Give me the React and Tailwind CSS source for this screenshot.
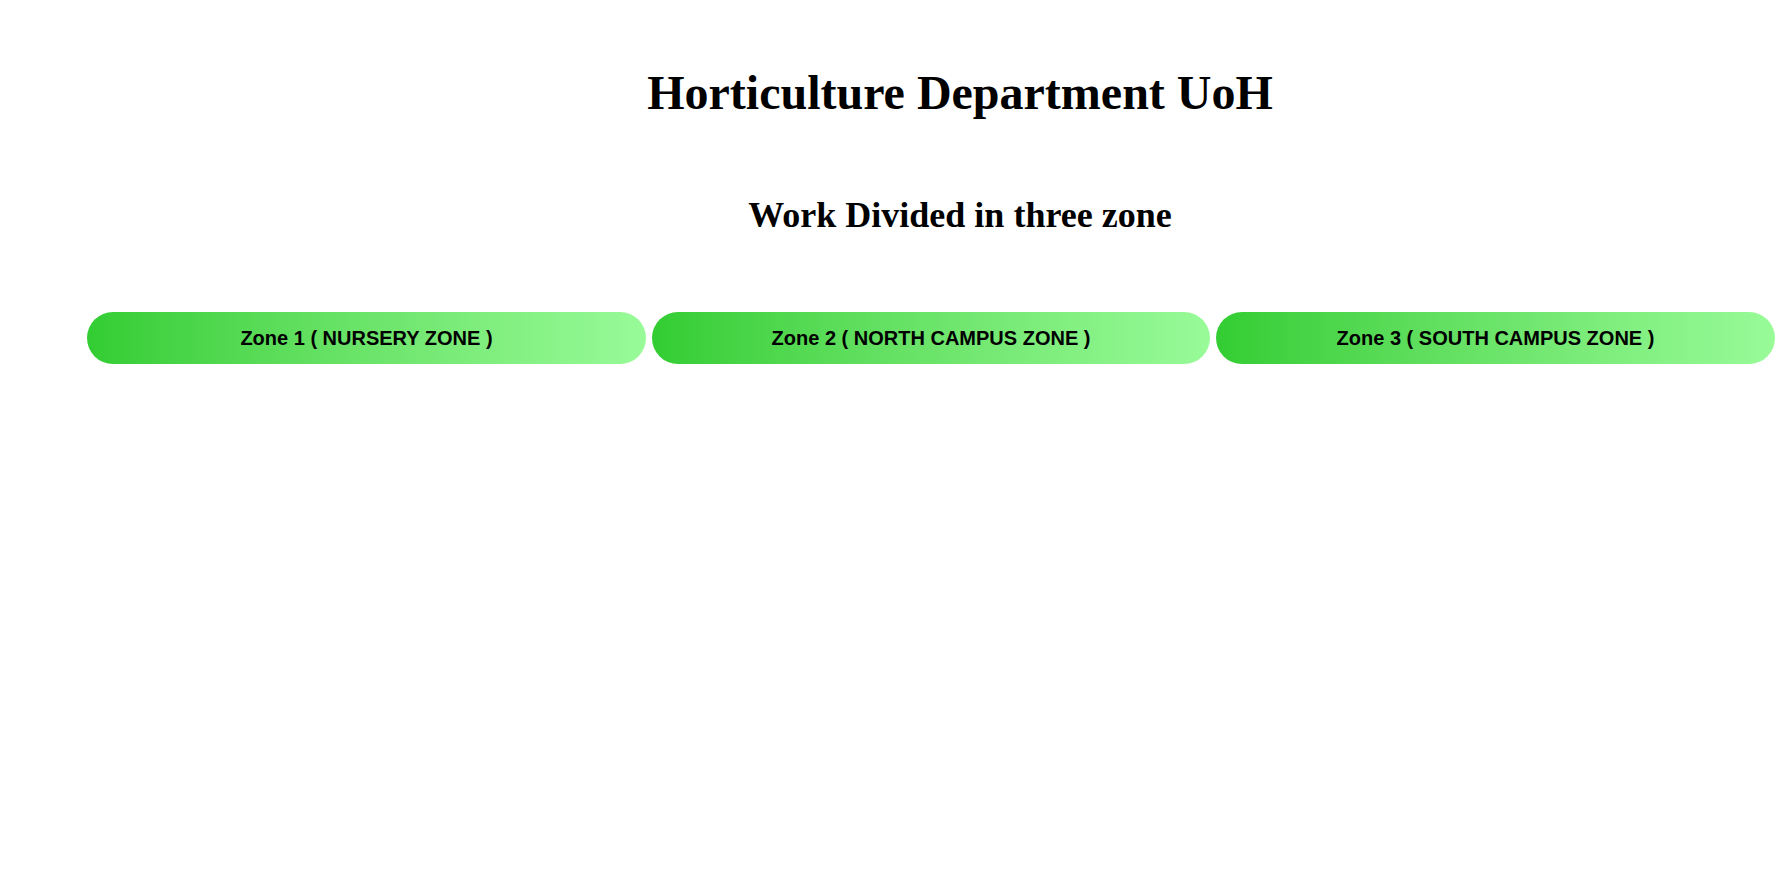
const zones = [
  { label: 'Zone 1 ( NURSERY ZONE )', width: 'w-[559px]' },
  { label: 'Zone 2 ( NORTH CAMPUS ZONE )', width: 'w-[558px]' },
  { label: 'Zone 3 ( SOUTH CAMPUS ZONE )', width: 'w-[559px]' },
];

export default function App() {
  return (
    <div className="min-h-screen bg-white text-black">
      {/* Headings */}
      <h1 className="pt-[66px] pl-[141px] text-center text-[48px] leading-[53px] font-bold font-['Liberation_Serif',serif]">
        Horticulture Department UoH
      </h1>
      <h2 className="mt-[76px] pl-[141px] text-center text-[36px] leading-[40px] font-bold font-['Liberation_Serif',serif]">
        Work Divided in three zone
      </h2>

      {/* Zone buttons */}
      <div className="mt-[77px] flex gap-[6px] pl-[87px]">
        {zones.map((zone) => (
          <button
            key={zone.label}
            className={`${zone.width} h-[52px] shrink-0 rounded-full bg-linear-to-r from-[#32cd32] to-[#98fb98] text-[20px] font-bold text-black font-['Liberation_Sans',Arial,sans-serif]`}
          >
            {zone.label}
          </button>
        ))}
      </div>
    </div>
  );
}
